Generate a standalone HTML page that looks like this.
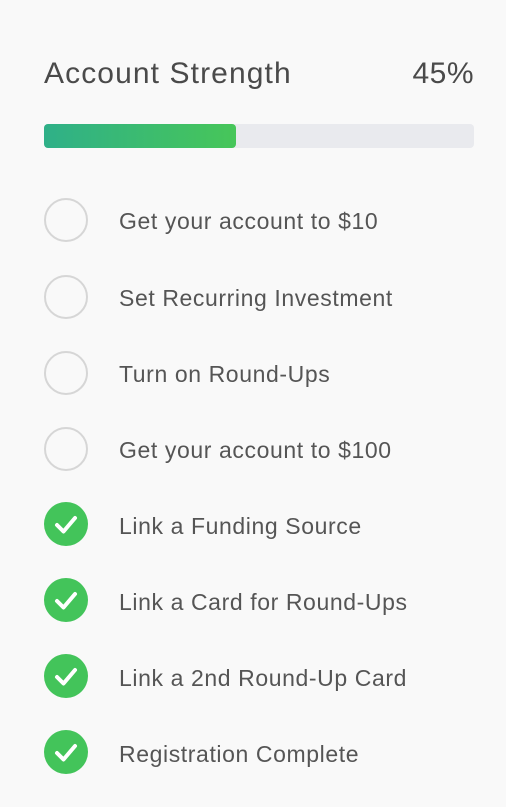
<!DOCTYPE html>
<html><head><style>
body{margin:0;width:506px;height:807px;background:#f9f9f9;font-family:"Liberation Sans",sans-serif;color:#4a4a4a;position:relative;overflow:hidden}
.t{position:absolute;top:57px;font-size:30px;font-weight:300;letter-spacing:1.1px}
.track{position:absolute;left:44px;top:124px;width:430px;height:24px;background:#e9eaee;border-radius:4px}
.fill{position:absolute;left:44px;top:124px;width:192px;height:24px;border-radius:4px;background:linear-gradient(90deg,#2fb088,#47c659)}
.c{position:absolute;left:44px;width:40px;height:40px;border:2px solid #d6d6d6;border-radius:50%}
.g{position:absolute;left:44px;width:44px;height:44px;border-radius:50%;background:#43c45a}
.g svg{position:absolute;left:0;top:0}
.l{position:absolute;left:119px;font-size:23px;line-height:26px;color:#555;letter-spacing:0.6px}
</style></head><body>
<div class="t" style="left:44px">Account Strength</div>
<div class="t" style="right:32px;letter-spacing:0.5px">45%</div>
<div class="track"></div><div class="fill"></div>

<div class="c" style="top:198px"></div><div class="l" style="top:208px">Get your account to $10</div>
<div class="c" style="top:275px"></div><div class="l" style="top:285px">Set Recurring Investment</div>
<div class="c" style="top:351px"></div><div class="l" style="top:361px">Turn on Round-Ups</div>
<div class="c" style="top:427px"></div><div class="l" style="top:437px">Get your account to $100</div>

<div class="g" style="top:502px"><svg width="44" height="44"><path d="M13 23 L19.5 29.5 L31 16" fill="none" stroke="#fff" stroke-width="4" stroke-linecap="round" stroke-linejoin="round"/></svg></div><div class="l" style="top:513px">Link a Funding Source</div>
<div class="g" style="top:578px"><svg width="44" height="44"><path d="M13 23 L19.5 29.5 L31 16" fill="none" stroke="#fff" stroke-width="4" stroke-linecap="round" stroke-linejoin="round"/></svg></div><div class="l" style="top:589px">Link a Card for Round-Ups</div>
<div class="g" style="top:654px"><svg width="44" height="44"><path d="M13 23 L19.5 29.5 L31 16" fill="none" stroke="#fff" stroke-width="4" stroke-linecap="round" stroke-linejoin="round"/></svg></div><div class="l" style="top:665px">Link a 2nd Round-Up Card</div>
<div class="g" style="top:730px"><svg width="44" height="44"><path d="M13 23 L19.5 29.5 L31 16" fill="none" stroke="#fff" stroke-width="4" stroke-linecap="round" stroke-linejoin="round"/></svg></div><div class="l" style="top:741px">Registration Complete</div>
</body></html>
